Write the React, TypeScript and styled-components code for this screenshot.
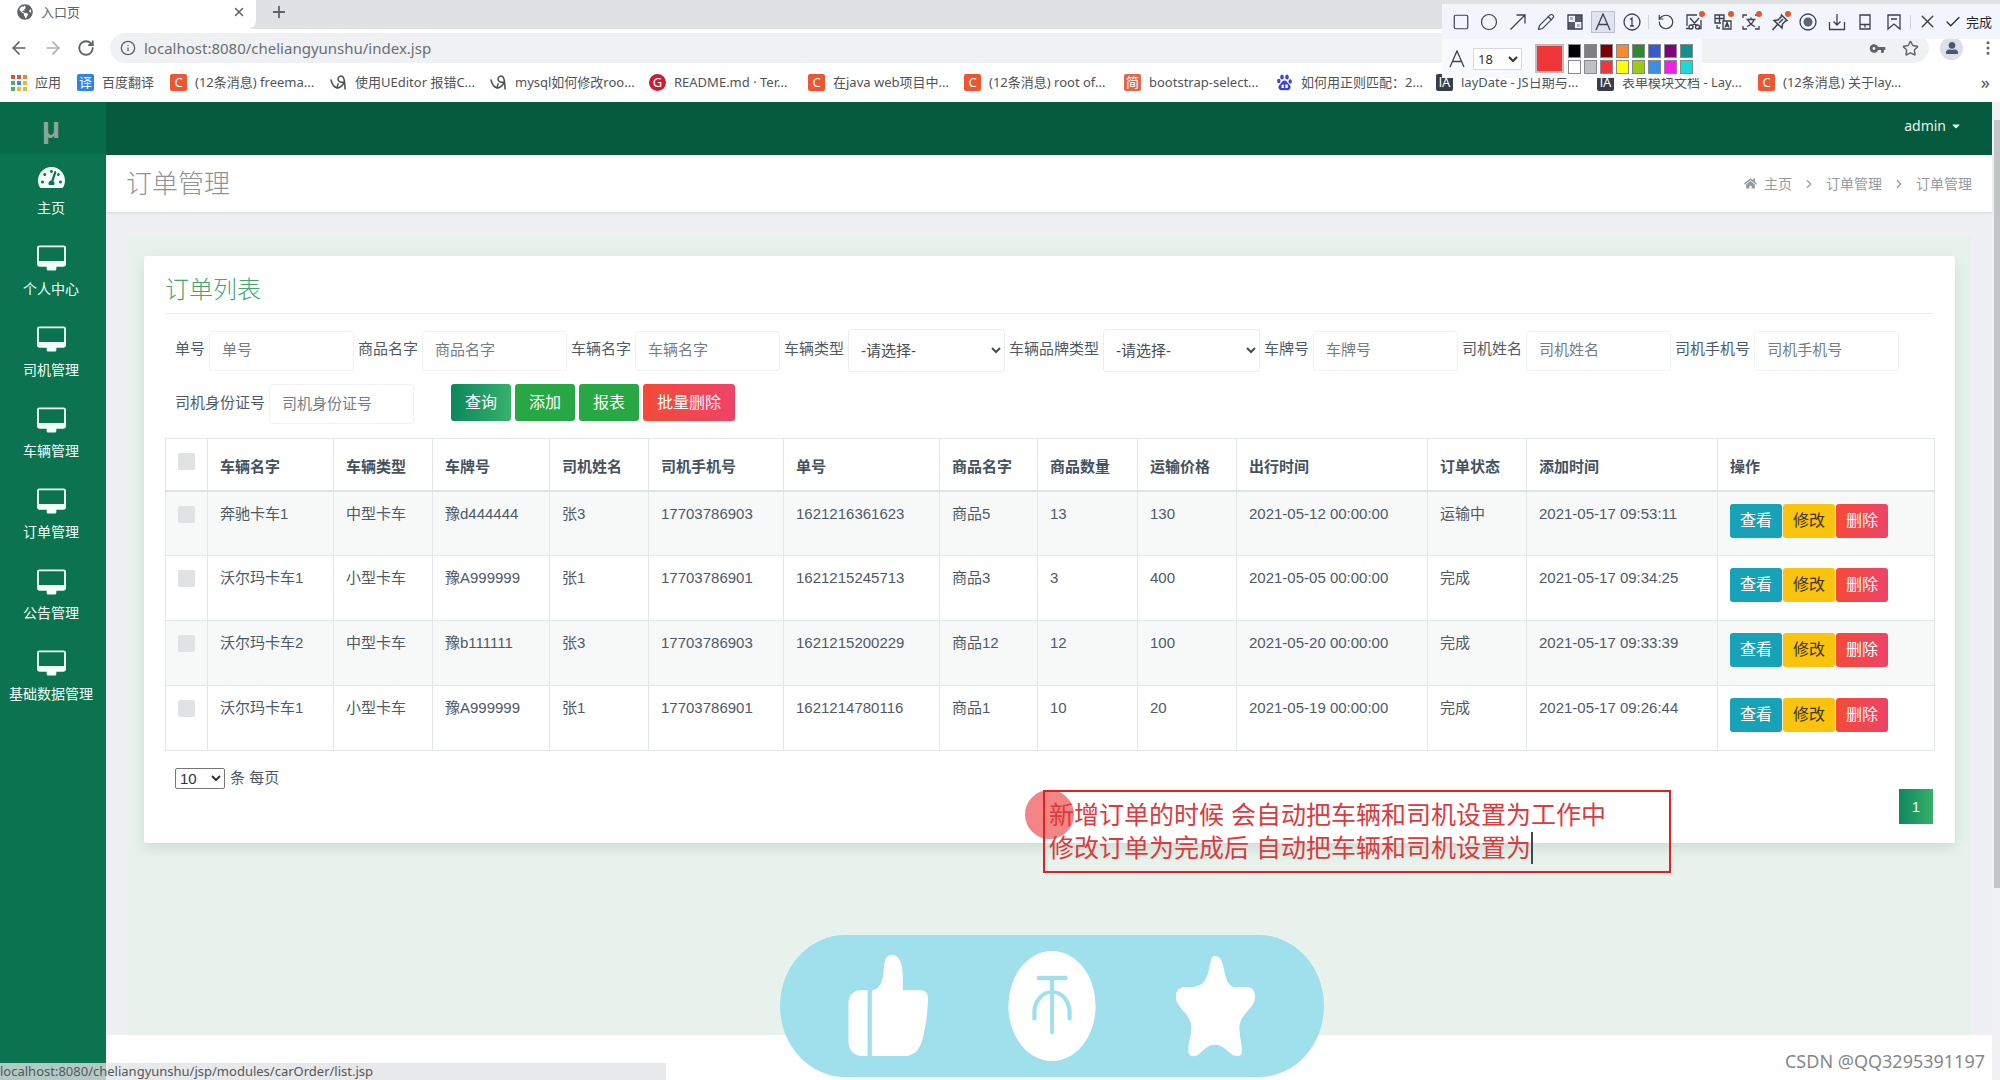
import React from 'react';
import styled, { createGlobalStyle } from 'styled-components';
import {
  Square, Circle, Pencil, RotateCcw, X, Check, ArrowLeft, ArrowRight, RotateCw, Info, Star,
  MoreVertical, Plus, ChevronRight,
} from 'lucide-react';
import { FaTachometerAlt, FaHome, FaUserAlt, FaGlobeAmericas, FaCaretDown } from 'react-icons/fa';
import { MdVpnKey } from 'react-icons/md';

const ui = `"Noto Sans", "Noto Sans CJK SC", sans-serif`;
const body = `"Liberation Sans", "Noto Sans CJK SC", sans-serif`;

const Global = createGlobalStyle`
  * { box-sizing: border-box; }
  html, body { margin: 0; padding: 0; }
  body { font-family: ${body}; font-size: 15px; color: #4d5a66; overflow: hidden; }
  button, input, select { font-family: inherit; margin: 0; }
  button { cursor: pointer; }
  a { color: inherit; text-decoration: none; }
`;

const Window = styled.div`
  position: relative;
  display: flex;
  flex-direction: column;
  min-height: 100vh;
  overflow: hidden;
  background: #fff;
`;

/* ---------- browser chrome ---------- */
const PlainButton = styled.button`
  display: flex;
  align-items: center;
  justify-content: center;
  padding: 0;
  border: 0;
  background: none;
  color: inherit;
`;

const TabStrip = styled.div`
  display: flex;
  height: 29px;
  background: #dfe1e5;
  font-family: ${ui};
  color: #5f6368;
`;

const Tab = styled.div`
  display: flex;
  align-items: center;
  gap: 8px;
  width: 256px;
  padding: 0 10px 5px 17px;
  background: #fff;
  border-radius: 0 0 8px 0;
  font-size: 13px;
  line-height: 18px;
  span { flex: 1; }
`;

const NewTab = styled(PlainButton)`
  width: 46px;
  padding-bottom: 5px;
`;

const AddressRow = styled.div`
  display: flex;
  align-items: center;
  height: 38px;
  padding: 0 3px 0 9px;
  color: #5f6368;
  font-family: ${ui};
`;

const NavButtons = styled.div`
  display: flex;
  gap: 14px;
  width: 101px;
`;

const Omnibox = styled.label`
  display: flex;
  flex: 1;
  align-items: center;
  gap: 7px;
  height: 30px;
  padding: 0 10px;
  border-radius: 15px;
  background: #f0f1f3;
  input {
    flex: 1;
    border: 0;
    outline: 0;
    padding: 0 1px;
    background: none;
    color: #6b6f74;
    font-size: 15px;
    line-height: 20px;
  }
`;

const OmniActions = styled.div`
  display: flex;
  gap: 16px;
`;

const Avatar = styled(PlainButton)`
  width: 23px;
  height: 23px;
  margin: 0 16px 0 11px;
  border-radius: 50%;
  background: #dcdfe8;
  color: #4c5570;
`;

const BookmarkBar = styled.nav`
  display: flex;
  align-items: center;
  height: 35px;
  padding: 0 10px 5px;
  font-family: ${ui};
  font-size: 13px;
  line-height: 18px;
  color: #505357;
`;

const BookmarkLink = styled.a<{ $w: number }>`
  display: flex;
  flex: 0 0 ${p => p.$w}px;
  align-items: center;
  gap: 8px;
  white-space: nowrap;
`;

const Chip = styled.span<{ $bg: string; $round?: boolean }>`
  display: flex;
  flex: none;
  align-items: center;
  justify-content: center;
  width: 17px;
  height: 17px;
  border-radius: ${p => (p.$round ? '50%' : '2px')};
  background: ${p => p.$bg};
  color: #fff;
  font-size: 13px;
  line-height: 17px;
`;

const More = styled(PlainButton)`
  margin-left: auto;
  font-size: 18px;
  line-height: 18px;
`;

/* ---------- annotation toolbar ---------- */
const Capture = styled.div`
  position: absolute;
  top: 4px;
  right: 0;
  width: 558px;
  color: #3c4050;
  font-family: ${ui};
`;

const ToolRow = styled.div`
  display: flex;
  align-items: center;
  justify-content: space-between;
  height: 35px;
  padding: 0 8px 0 7px;
  background: #f3f5fc;
`;

const Tool = styled(PlainButton)<{ $active?: boolean; $dot?: boolean }>`
  position: relative;
  width: 24px;
  height: 22px;
  border: 1px solid ${p => (p.$active ? '#b9bfcc' : 'transparent')};
  background: ${p => (p.$active ? '#dfe3ee' : 'none')};
  &::after {
    content: '';
    display: ${p => (p.$dot ? 'block' : 'none')};
    position: absolute;
    top: -1px;
    right: 0;
    width: 6px;
    height: 6px;
    border-radius: 50%;
    background: #e8562a;
  }
`;

const Separator = styled.i`
  width: 1px;
  height: 14px;
  background: #d0d4de;
`;

const Done = styled(PlainButton)`
  gap: 4px;
  font-size: 13px;
  line-height: 18px;
  color: #22252e;
`;

const StyleRow = styled.div`
  display: flex;
  align-items: center;
  width: 260px;
  height: 39px;
  padding: 0 4px 0 6px;
  background: #f8f9fe;
`;

const SizeSelect = styled.select`
  width: 49px;
  height: 22px;
  margin: 0 13px 0 7px;
  border: 1px solid #d5d8e0;
  background: #fff;
  color: #333;
  font-size: 13px;
`;

const CurrentColor = styled(PlainButton)`
  width: 29px;
  height: 29px;
  margin-right: 4px;
  border: 2px solid #bdbdbd;
  background: #f03639;
`;

const Palette = styled.div`
  display: grid;
  grid-template-columns: repeat(8, 13px);
  gap: 2px 3px;
`;

const Swatch = styled(PlainButton)<{ $c: string }>`
  height: 14px;
  border: 1px solid #8a8a8a;
  background: ${p => p.$c};
`;

/* ---------- admin application ---------- */
const Shell = styled.div`
  display: flex;
  flex: 1;
`;

const Sidebar = styled.aside`
  flex: none;
  width: 106px;
  background: #0b7350;
  color: #f2fffa;
`;

const Logo = styled.a`
  display: flex;
  align-items: center;
  justify-content: center;
  height: 52px;
  padding-right: 4px;
  background: #076b4a;
  color: #8fa59b;
  font-size: 30px;
  font-weight: 700;
  line-height: 36px;
`;

const SideLink = styled.a`
  display: flex;
  flex-direction: column;
  align-items: center;
  height: 81px;
  padding: 10px 4px 0 0;
  font-size: 14px;
  line-height: 20px;
  white-space: nowrap;
`;

const IconSlot = styled.span`
  display: flex;
  align-items: center;
  height: 26px;
  margin-bottom: 8px;
`;

const Main = styled.div`
  display: flex;
  flex: 1;
  flex-direction: column;
  min-width: 0;
`;

const TopBar = styled.header`
  display: flex;
  align-items: center;
  justify-content: flex-end;
  height: 53px;
  padding: 0 30px 6px;
  background: #065a3e;
  color: #e4f3ec;
`;

const UserButton = styled(PlainButton)`
  gap: 4px;
  font-family: ${ui};
  font-size: 14px;
  line-height: 20px;
`;

const TitleBar = styled.div`
  display: flex;
  align-items: center;
  justify-content: space-between;
  height: 58px;
  padding: 0 20px;
  border-bottom: 1px solid #dcdfe3;
  box-shadow: 0 1px 2px rgba(0, 0, 0, 0.06);
  z-index: 1;
`;

const PageTitle = styled.h1`
  margin: 0;
  color: #8f9396;
  font-size: 26px;
  font-weight: 300;
  line-height: 34px;
`;

const Crumbs = styled.nav`
  display: flex;
  align-items: center;
  color: #949b9f;
  font-size: 14px;
  line-height: 20px;
  a { display: flex; align-items: center; gap: 7px; }
  > svg { margin: 0 10px; }
`;

const Content = styled.main`
  flex: 1;
  padding: 22px 21px 0 22px;
  background: #eff0f3;
`;

const Tint = styled.div`
  height: 100%;
  padding: 21px 16px 0;
  background: #e7f2ec;
`;

const Card = styled.section`
  padding: 17px 22px 19px 21px;
  border-radius: 2px;
  background: #fff;
  box-shadow: 0 5px 14px rgba(60, 90, 90, 0.14);
`;

const CardTitle = styled.h2`
  margin: 0 0 15px;
  padding-bottom: 6px;
  border-bottom: 1px solid #ebedee;
  color: #44a56e;
  font-size: 24px;
  font-weight: 300;
  line-height: 34px;
`;

const Filters = styled.form`
  display: flex;
  flex-wrap: wrap;
  align-items: center;
  gap: 12px 4px;
  margin-bottom: 14px;
  padding-left: 10px;
`;

const Field = styled.label`
  display: flex;
  align-items: center;
  gap: 4px;
  line-height: 20px;
  color: #4d5a66;
`;

const LabelText = styled.span`
  padding-bottom: 3px;
`;

const TextInput = styled.input`
  width: 145px;
  height: 40px;
  padding: 0 12px 2px;
  border: 1px solid #f0f2f3;
  border-radius: 3px;
  outline: 0;
  background: #fff;
  color: #495057;
  font-size: 15px;
  &::placeholder { color: #757d84; }
`;

const FilterSelect = styled.select`
  width: 157px;
  height: 43px;
  padding: 0 0 0 8px;
  border: 1px solid #eaecee;
  border-radius: 3px;
  background: #fff;
  color: #444c54;
  font-size: 15px;
`;

const FilterButtons = styled.div`
  display: flex;
  align-items: center;
  gap: 4px;
  margin-left: 33px;
  padding-bottom: 3px;
`;

const tones = {
  search: 'linear-gradient(90deg, #0c875e, #37b16b)',
  green: '#28a745',
  danger: 'linear-gradient(90deg, #f34b36, #ee4369)',
  info: '#17a2b8',
  warn: '#fac30d',
};

const Btn = styled.button<{ $tone: keyof typeof tones; $small?: boolean }>`
  height: ${p => (p.$small ? 34 : 37)}px;
  padding: 0 ${p => (p.$small ? 10 : 14)}px;
  border: 0;
  border-radius: 3px;
  background: ${p => tones[p.$tone]};
  color: ${p => (p.$tone === 'warn' ? '#3b3520' : '#fff')};
  font-size: 16px;
  line-height: 24px;
`;

const Orders = styled.table`
  width: 100%;
  border-collapse: collapse;
  table-layout: fixed;
  th, td {
    border: 1px solid #e4e7ea;
    padding: 12px 12px 0;
    text-align: left;
    vertical-align: top;
    line-height: 20px;
    white-space: nowrap;
  }
  th {
    height: 52px;
    padding-top: 18px;
    border-bottom: 2px solid #dee2e6;
    color: #45525e;
    font-weight: 700;
  }
  td { height: 65px; }
  tbody tr:nth-child(odd) { background: #f7f8f8; }
  th:first-child { padding-top: 14px; }
  td:first-child { padding-top: 14px; }
`;

const Tick = styled.input`
  display: block;
  appearance: none;
  width: 17px;
  height: 17px;
  margin: 0;
  border-radius: 2px;
  background: #e0e2e4;
`;

const Actions = styled.div`
  display: flex;
  gap: 1px;
`;

const PageSize = styled.label`
  display: flex;
  align-items: center;
  gap: 5px;
  height: 22px;
  margin: 16px 0 0 10px;
  line-height: 20px;
  select {
    width: 50px;
    height: 21px;
    border: 1px solid #767676;
    border-radius: 2px;
    background: #fff;
    color: #333;
    font-size: 15px;
  }
`;

const Pager = styled.div`
  display: flex;
  justify-content: flex-end;
`;

const PageButton = styled.button`
  width: 34px;
  height: 35px;
  border: 0;
  background: linear-gradient(90deg, #10875d, #36b06a);
  color: #fff;
  font-size: 15px;
`;

const Footer = styled.footer`
  height: 45px;
  background: #fff;
`;

const ScrollTrack = styled.div`
  flex: none;
  width: 8px;
  padding-top: 18px;
  background: #f1f1f3;
`;

const ScrollThumb = styled.div`
  height: 80%;
  margin-left: 2px;
  background: #c3c4c6;
`;

/* ---------- things lying over the page ---------- */
const Note = styled.div`
  position: absolute;
  top: 790px;
  left: 1043px;
  width: 628px;
  height: 83px;
  padding: 7px 4px;
  border: 2px solid #dc2324;
  color: #dc3a3c;
  font-size: 25px;
  line-height: 33px;
  white-space: nowrap;
`;

const Caret = styled.i`
  display: inline-block;
  width: 2px;
  height: 32px;
  background: #44484c;
  vertical-align: top;
`;

const ClickMark = styled.div`
  position: absolute;
  top: 790px;
  left: 1025px;
  width: 49px;
  height: 49px;
  border-radius: 50%;
  background: rgba(236, 58, 62, 0.62);
`;

const Pill = styled.div`
  position: absolute;
  top: 935px;
  left: 780px;
  svg { display: block; }
`;

const StatusBubble = styled.div`
  position: absolute;
  bottom: 0;
  left: 0;
  width: 666px;
  height: 17px;
  background: rgba(225, 227, 230, 0.78);
  color: #53585c;
  font-family: ${ui};
  font-size: 13px;
  line-height: 17px;
`;

const Watermark = styled.div`
  position: absolute;
  right: 15px;
  bottom: 6px;
  color: #85888b;
  font-family: ${ui};
  font-size: 18px;
  line-height: 26px;
`;

const AppsIcon = () => {
  const c = ['#d9534a', '#d9534a', '#e08a3c', '#4caf6a', '#4a86e0', '#e2b93b', '#4caf6a', '#e2b93b', '#e2b93b'];
  return (
    <svg width="17" height="17" viewBox="0 0 17 17">
      {c.map((f, i) => <rect key={i} x={1 + (i % 3) * 6} y={1 + Math.floor(i / 3) * 6} width="4" height="4" fill={f} />)}
    </svg>
  );
};

const BlogIcon = () => (
  <svg width="17" height="17" viewBox="0 0 17 17" fill="none" stroke="#4a4d52" strokeWidth="1.5" strokeLinecap="round">
    <path d="M1 6c1 4 3 7 6 8l1-4M14 8c-3 1-6-.5-6-3s3-4 5-2c2 3 2 8 2 12M7 14c3 0 5-2 7-5" />
  </svg>
);

const PawIcon = () => (
  <svg width="17" height="17" viewBox="0 0 17 17" fill="#3b46d6">
    <ellipse cx="6" cy="3" rx="1.800" ry="2.500" />
    <ellipse cx="11" cy="3" rx="1.800" ry="2.500" />
    <ellipse cx="2.800" cy="7" rx="1.700" ry="2.200" />
    <ellipse cx="14.200" cy="7.500" rx="1.700" ry="2.200" />
    <path fillRule="evenodd" d="M8.500 6.500c2 0 3 2 4 3.200 1.500 1.500 2.500 2.500 2 4.300-.6 2.500-3.500 2.500-6 2-2.500.5-5.400.5-6-2-.4-1.800.6-2.800 2-4.300 1-1.200 2-3.200 4-3.200zM5.500 11v3h2.300v-3.500zM9.300 10.500V14h2.500v-3.500z" />
  </svg>
);

const MonitorIcon = () => (
  <svg width="29" height="26" viewBox="0 0 30 26" fill="currentColor">
    <path fillRule="evenodd" d="M2.500 0h25A2.500 2.500 0 0 1 30 2.500v17a2.500 2.500 0 0 1-2.500 2.500H20v2c0 1-.5 2-1.500 2h-7c-1 0-1.500-1-1.500-2v-2H2.500A2.500 2.500 0 0 1 0 19.500v-17A2.500 2.500 0 0 1 2.500 0zM2 2v14h26V2z" />
  </svg>
);

const Glyph = ({ children, width = 1.3 }: { children: React.ReactNode; width?: number }) => (
  <svg width="18" height="18" viewBox="0 0 18 18" fill="none" stroke="currentColor" strokeWidth={width}>
    {children}
  </svg>
);

const ArrowTool = () => <Glyph><path d="M1.500 16.500 16 2M7.500 2H16v8.500" /></Glyph>;

const MosaicIcon = () => (
  <Glyph>
    <path d="M2 2h14v14H2z" />
    <path d="M9 2h7v7H9zM2 9h7v7H2z" fill="currentColor" stroke="none" opacity=".85" />
    <path d="M4 4h3v3H4zM11 11h3v3h-3z" fill="currentColor" stroke="none" opacity=".35" />
  </Glyph>
);

const LetterIcon = () => <Glyph><path d="M2 17 9 1l7 16M4.500 11.500h9" /></Glyph>;

const StepIcon = () => (
  <Glyph>
    <circle cx="9" cy="9" r="8" />
    <path d="m7 6.500 2-1.500v8M7 13h4" />
  </Glyph>
);

const CutIcon = () => (
  <Glyph>
    <path d="M12 2H2v11M1 15.500h4M16 7v8.500h-3M5 5l7 8M14 5l-7 8" />
    <circle cx="6" cy="14" r="2" />
    <circle cx="12.500" cy="14" r="2" />
  </Glyph>
);

const TranslateIcon = () => (
  <Glyph>
    <path d="M10 8V2H1v8h6M1 5.500h9M5.500 2v8" />
    <path d="M9 8h8v8H9zM11 14.500l2-5 2 5M11.500 13h3M3 12v3h3" />
  </Glyph>
);

const RecognizeIcon = () => (
  <Glyph>
    <path d="M1 5V2h4M1 13v3h4M17 13v3h-4M13 2h2M4.500 6.500h9M9 4.500v2M12 6.500c-1 3-4 6-7 7M6 6.500c1 3 4 6 7 7" />
  </Glyph>
);

const PushpinIcon = () => (
  <Glyph width={1.5}>
    <path d="m10.500 2 5.500 5.500-1.500.5-3 3-.5 4L3 7.500l4-.5 3-3zM6.500 11.500 1.500 17M8 10l4-4" />
  </Glyph>
);

const RecordIcon = () => (
  <Glyph>
    <circle cx="9" cy="9" r="8" />
    <circle cx="9" cy="9" r="4.500" fill="#5f6372" stroke="none" />
  </Glyph>
);

const SaveIcon = () => <Glyph><path d="M1.500 9v7.500h15V9M9 1v11M5.500 8.500 9 12l3.500-3.500" /></Glyph>;

const PhoneIcon = () => <Glyph><path d="M4 2h10v14H4zM4 11.500h10M9 12v2.500" /></Glyph>;

const FlagIcon = () => <Glyph><path d="M3 2h12v14l-6-5-6 5zM6 6h6" /></Glyph>;

const Reactions = () => (
  <svg width="544" height="142" viewBox="53 105 1422 426" preserveAspectRatio="none">
    <rect x="53" y="105" width="1422" height="426" rx="170" ry="213" fill="#a0dfec" />
    <g fill="#fff">
      <path d="M282 271h-22c-18 3-28 18-28 38v116c0 24 12 38 30 43h20z" />
      <path d="M293 272c18-6 26-20 30-48 3-22 0-60 23-60 22 0 28 40 28 62v45h46c14 0 20 8 20 24-1 44-6 84-14 120-6 30-18 48-40 53h-93z" />
      <ellipse cx="764" cy="318" rx="114" ry="165" />
      <path d="M1190 168c12 0 18 12 22 32 5 30 10 52 24 60 12 3 28 0 42 2 14 4 18 16 16 38-8 30-36 42-40 78-2 28 8 52 6 80-2 12-12 12-22 8-16-12-28-32-48-32s-32 20-46 32c-10 4-20 4-23-8-4-26 9-52 7-80-3-34-30-50-39-76-3-22 0-34 16-40 14-2 28 2 44-6 16-8 22-28 27-58 4-20 6-30 14-30z" />
    </g>
    <g fill="none" stroke="#a0dfec" strokeLinecap="round">
      <path d="M731 234h67" strokeWidth="14" />
      <path d="M764 238v160" strokeWidth="10" />
      <path d="M718 356v-22c2-32 20-58 46-58s44 26 46 58v22" strokeWidth="11" />
    </g>
  </svg>
);

const bookmarks: { w: number; text: string; icon: React.ReactNode }[] = [
  { w: 67, text: '应用', icon: <AppsIcon /> },
  { w: 93, text: '百度翻译', icon: <Chip $bg="#2b84e8">译</Chip> },
  { w: 160, text: '(12条消息) freema...', icon: <Chip $bg="#ee5533">C</Chip> },
  { w: 160, text: '使用UEditor 报错C...', icon: <BlogIcon /> },
  { w: 159, text: 'mysql如何修改roo...', icon: <BlogIcon /> },
  { w: 159, text: 'README.md · Ter...', icon: <Chip $bg="#c71d35" $round>G</Chip> },
  { w: 156, text: '在java web项目中...', icon: <Chip $bg="#ee5533">C</Chip> },
  { w: 160, text: '(12条消息) root of...', icon: <Chip $bg="#ee5533">C</Chip> },
  { w: 152, text: 'bootstrap-select...', icon: <Chip $bg="#e2674f">简</Chip> },
  { w: 160, text: '如何用正则匹配：2...', icon: <PawIcon /> },
  { w: 161, text: 'layDate - JS日期与...', icon: <Chip $bg="#393d49">lA</Chip> },
  { w: 161, text: '表单模块文档 - Lay...', icon: <Chip $bg="#393d49">lA</Chip> },
  { w: 160, text: '(12条消息) 关于lay...', icon: <Chip $bg="#ee5533">C</Chip> },
];

const line = { size: 18, strokeWidth: 1.6 };
const toolGroups: { name: string; icon: React.ReactNode; active?: boolean; dot?: boolean }[][] = [
  [
    { name: '矩形', icon: <Square {...line} /> },
    { name: '椭圆', icon: <Circle {...line} /> },
    { name: '箭头', icon: <ArrowTool /> },
    { name: '画笔', icon: <Pencil {...line} /> },
    { name: '马赛克', icon: <MosaicIcon /> },
    { name: '文字', icon: <LetterIcon />, active: true },
    { name: '序号', icon: <StepIcon /> },
  ],
  [
    { name: '撤销', icon: <RotateCcw {...line} /> },
    { name: '裁剪', icon: <CutIcon />, dot: true },
    { name: '翻译', icon: <TranslateIcon />, dot: true },
    { name: '识别', icon: <RecognizeIcon />, dot: true },
    { name: '固定', icon: <PushpinIcon />, dot: true },
    { name: '录制', icon: <RecordIcon /> },
    { name: '下载', icon: <SaveIcon /> },
    { name: '手机', icon: <PhoneIcon /> },
    { name: '收藏', icon: <FlagIcon /> },
  ],
];

const colors = [
  '#000', '#808080', '#800000', '#f68b34', '#2f8a2f', '#3659cf', '#800080', '#109292',
  '#fff', '#c0c0c0', '#f23639', '#ffff00', '#99cc10', '#3691e6', '#f51bec', '#1bdada',
];

const menu = ['主页', '个人中心', '司机管理', '车辆管理', '订单管理', '公告管理', '基础数据管理'];

const filters: { label: string; select?: boolean }[] = [
  { label: '单号' }, { label: '商品名字' }, { label: '车辆名字' },
  { label: '车辆类型', select: true }, { label: '车辆品牌类型', select: true },
  { label: '车牌号' }, { label: '司机姓名' }, { label: '司机手机号' }, { label: '司机身份证号' },
];

const columns: [string, number][] = [
  ['车辆名字', 126], ['车辆类型', 99], ['车牌号', 117], ['司机姓名', 99], ['司机手机号', 135],
  ['单号', 156], ['商品名字', 98], ['商品数量', 100], ['运输价格', 99], ['出行时间', 191],
  ['订单状态', 99], ['添加时间', 191], ['操作', 217],
];

const rows = [
  ['奔驰卡车1', '中型卡车', '豫d444444', '张3', '17703786903', '1621216361623', '商品5', '13', '130', '2021-05-12 00:00:00', '运输中', '2021-05-17 09:53:11'],
  ['沃尔玛卡车1', '小型卡车', '豫A999999', '张1', '17703786901', '1621215245713', '商品3', '3', '400', '2021-05-05 00:00:00', '完成', '2021-05-17 09:34:25'],
  ['沃尔玛卡车2', '中型卡车', '豫b111111', '张3', '17703786903', '1621215200229', '商品12', '12', '100', '2021-05-20 00:00:00', '完成', '2021-05-17 09:33:39'],
  ['沃尔玛卡车1', '小型卡车', '豫A999999', '张1', '17703786901', '1621214780116', '商品1', '10', '20', '2021-05-19 00:00:00', '完成', '2021-05-17 09:26:44'],
];

function BrowserChrome() {
  return (
    <>
      <TabStrip>
        <Tab>
          <FaGlobeAmericas size={16} />
          <span>入口页</span>
          <PlainButton aria-label="关闭标签页"><X size={14} strokeWidth={2.5} /></PlainButton>
        </Tab>
        <NewTab aria-label="新标签页"><Plus size={18} strokeWidth={2.4} /></NewTab>
      </TabStrip>
      <AddressRow>
        <NavButtons>
          <PlainButton aria-label="后退"><ArrowLeft size={20} /></PlainButton>
          <PlainButton aria-label="前进" disabled><ArrowRight size={20} opacity={0.5} /></PlainButton>
          <PlainButton aria-label="刷新"><RotateCw size={18} strokeWidth={2.4} /></PlainButton>
        </NavButtons>
        <Omnibox>
          <Info size={16} />
          <input aria-label="地址" defaultValue="localhost:8080/cheliangyunshu/index.jsp" />
          <OmniActions>
            <PlainButton aria-label="密码"><MdVpnKey size={17} /></PlainButton>
            <PlainButton aria-label="收藏此页"><Star size={17} /></PlainButton>
          </OmniActions>
        </Omnibox>
        <Avatar aria-label="用户"><FaUserAlt size={12} /></Avatar>
        <PlainButton aria-label="菜单"><MoreVertical size={18} /></PlainButton>
      </AddressRow>
      <BookmarkBar>
        {bookmarks.map((b, i) => (
          <BookmarkLink key={i} href="#" $w={b.w}>{b.icon}{b.text}</BookmarkLink>
        ))}
        <More aria-label="更多书签">»</More>
      </BookmarkBar>
    </>
  );
}

function CaptureToolbar() {
  return (
    <Capture>
      <ToolRow>
        {toolGroups.map((group, g) => (
          <React.Fragment key={g}>
            {group.map(t => (
              <Tool key={t.name} aria-label={t.name} $active={t.active} $dot={t.dot}>{t.icon}</Tool>
            ))}
            <Separator />
          </React.Fragment>
        ))}
        <Tool aria-label="取消"><X {...line} size={21} /></Tool>
        <Done><Check {...line} />完成</Done>
      </ToolRow>
      <StyleRow>
        <LetterIcon />
        <SizeSelect aria-label="字号" defaultValue="18"><option>18</option></SizeSelect>
        <CurrentColor aria-label="当前颜色" />
        <Palette>{colors.map(c => <Swatch key={c} aria-label={c} $c={c} />)}</Palette>
      </StyleRow>
    </Capture>
  );
}

function OrderTable() {
  return (
    <Orders>
      <colgroup>
        <col style={{ width: 42 }} />
        {columns.map(([name, w]) => <col key={name} style={{ width: w }} />)}
      </colgroup>
      <thead>
        <tr>
          <th><Tick type="checkbox" aria-label="全选" /></th>
          {columns.map(([name]) => <th key={name}>{name}</th>)}
        </tr>
      </thead>
      <tbody>
        {rows.map(row => (
          <tr key={row[5]}>
            <td><Tick type="checkbox" aria-label={row[5]} /></td>
            {row.map((v, i) => <td key={i}>{v}</td>)}
            <td>
              <Actions>
                <Btn $tone="info" $small>查看</Btn>
                <Btn $tone="warn" $small>修改</Btn>
                <Btn $tone="danger" $small>删除</Btn>
              </Actions>
            </td>
          </tr>
        ))}
      </tbody>
    </Orders>
  );
}

export default function App() {
  return (
    <Window>
      <Global />
      <BrowserChrome />
      <Shell>
        <Sidebar>
          <Logo href="#">μ</Logo>
          {menu.map((m, i) => (
            <SideLink key={m} href="#">
              <IconSlot>{i === 0 ? <FaTachometerAlt size={27} /> : <MonitorIcon />}</IconSlot>
              {m}
            </SideLink>
          ))}
        </Sidebar>
        <Main>
          <TopBar>
            <UserButton>admin <FaCaretDown size={12} /></UserButton>
          </TopBar>
          <TitleBar>
            <PageTitle>订单管理</PageTitle>
            <Crumbs>
              <a href="#"><FaHome size={13} />主页</a>
              <ChevronRight size={14} />
              <a href="#">订单管理</a>
              <ChevronRight size={14} />
              <span>订单管理</span>
            </Crumbs>
          </TitleBar>
          <Content>
            <Tint>
              <Card>
                <CardTitle>订单列表</CardTitle>
                <Filters onSubmit={e => e.preventDefault()}>
                  {filters.map(f => (
                    <Field key={f.label}>
                      <LabelText>{f.label}</LabelText>
                      {f.select
                        ? <FilterSelect><option>-请选择-</option></FilterSelect>
                        : <TextInput placeholder={f.label} />}
                    </Field>
                  ))}
                  <FilterButtons>
                    <Btn type="button" $tone="search">查询</Btn>
                    <Btn type="button" $tone="green">添加</Btn>
                    <Btn type="button" $tone="green">报表</Btn>
                    <Btn type="button" $tone="danger">批量删除</Btn>
                  </FilterButtons>
                </Filters>
                <OrderTable />
                <PageSize>
                  <select defaultValue="10"><option>10</option></select>
                  条 每页
                </PageSize>
                <Pager><PageButton>1</PageButton></Pager>
              </Card>
            </Tint>
          </Content>
          <Footer />
        </Main>
        <ScrollTrack><ScrollThumb /></ScrollTrack>
      </Shell>
      <CaptureToolbar />
      <ClickMark />
      <Note>
        新增订单的时候 会自动把车辆和司机设置为工作中<br />
        修改订单为完成后 自动把车辆和司机设置为<Caret />
      </Note>
      <Pill><Reactions /></Pill>
      <StatusBubble>localhost:8080/cheliangyunshu/jsp/modules/carOrder/list.jsp</StatusBubble>
      <Watermark>CSDN @QQ3295391197</Watermark>
    </Window>
  );
}
